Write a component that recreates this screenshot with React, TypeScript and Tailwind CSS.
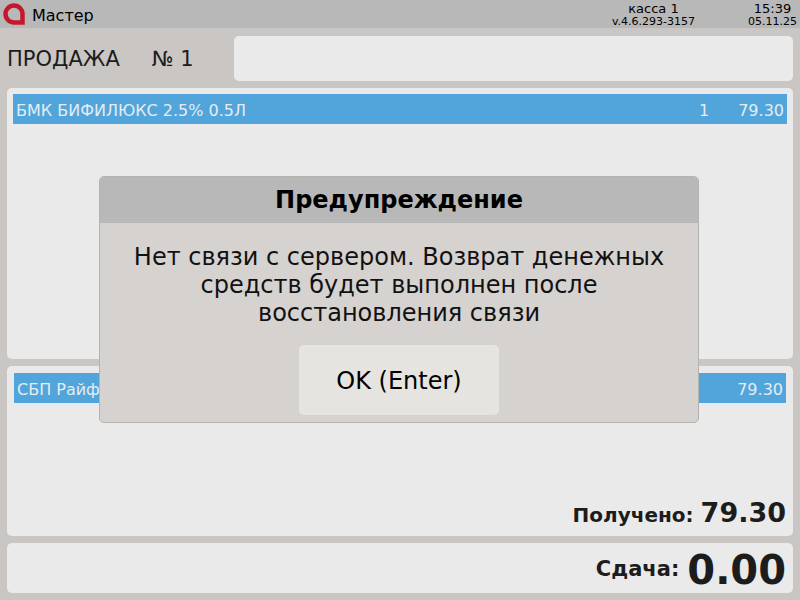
export default function App() {
  return (
    <div className="relative flex h-[600px] w-[800px] flex-col overflow-hidden bg-[#cac6c3] text-[#1c1c1c]" style={{ fontFamily: '"DejaVu Sans", sans-serif' }}>
      <header className="flex h-[28px] shrink-0 items-center bg-[#b8b8b8]">
        <svg className="ml-[3px] h-[22px] w-[22px]" viewBox="0 0 22 22">
          <path d="M19.5 19.5H11A8.5 8.5 0 1 1 19.5 11Z" fill="none" stroke="#c4182c" strokeWidth="4.5" strokeLinejoin="miter" />
        </svg>
        <span className="ml-[7px] pt-[3px] text-[16px] leading-none text-black">Мастер</span>
        <div className="ml-auto flex h-full flex-col items-center pt-[2px] text-black">
          <span className="text-[13px] leading-[14px]">касса 1</span>
          <span className="text-[11px] leading-[12px]">v.4.6.293-3157</span>
        </div>
        <div className="ml-[53px] mr-[3px] flex h-full flex-col items-center pt-[2px] text-black">
          <span className="text-[13px] leading-[14px]">15:39</span>
          <span className="text-[11px] leading-[12px]">05.11.25</span>
        </div>
      </header>
      <div className="flex h-[60px] shrink-0 items-center pl-[7px] pr-[7px]">
        <span className="pt-[4px] text-[21px]">ПРОДАЖА</span>
        <span className="ml-[32px] pt-[4px] text-[21px]">№ 1</span>
        <div className="ml-auto mt-[1px] h-[45px] w-[559px] rounded-[5px] bg-[#eaeaea]" />
      </div>
      <section className="mx-[7px] h-[271px] shrink-0 rounded-[5px] bg-[#eaeaea] p-[6px]">
        <div className="flex h-[30px] items-center bg-[#52a5da] pl-[3px] pr-[3px] pt-[3px] text-[16px] text-[#e4ecf2]">
          <span>БМК БИФИЛЮКС 2.5% 0.5Л</span>
          <span className="ml-auto">1</span>
          <span className="ml-[29px]">79.30</span>
        </div>
      </section>
      <section className="mx-[7px] mt-[7px] flex h-[170px] shrink-0 flex-col rounded-[5px] bg-[#eaeaea] px-[7px] pt-[7px]">
        <div className="flex h-[30px] items-center justify-between bg-[#52a5da] pl-[3px] pr-[3px] pt-[3px] text-[16px] text-[#e4ecf2]">
          <span>СБП Райффайзен</span>
          <span>79.30</span>
        </div>
        <div className="mt-auto mb-[3px] flex items-baseline justify-end">
          <span className="text-[20px] font-bold">Получено:</span>
          <span className="ml-[7px] text-[27px] font-bold">79.30</span>
        </div>
      </section>
      <section className="mx-[7px] mt-[7px] flex h-[50px] shrink-0 items-center justify-end rounded-[5px] bg-[#eaeaea] px-[7px]">
        <span className="pt-[3px] text-[21px] font-bold">Сдача:</span>
        <span className="ml-[8px] pt-[3px] text-[40px] font-bold leading-none">0.00</span>
      </section>
      <div className="absolute left-[99px] top-[176px] flex h-[247px] w-[600px] flex-col overflow-hidden rounded-[5px] border border-[#b5b3b0] bg-[#d6d2cf] text-black">
        <div className="flex h-[46px] shrink-0 items-center justify-center bg-[#b8b8b8] text-[24px] font-bold">Предупреждение</div>
        <p className="mt-[20px] text-center text-[24px] leading-[28px] text-[#111]">
          Нет связи с сервером. Возврат денежных<br />средств будет выполнен после<br />восстановления связи
        </p>
        <button className="mx-auto mt-[18px] h-[70px] w-[200px] rounded-[5px] bg-[#e6e4e1] pt-[2px] text-[24px]">OK (Enter)</button>
      </div>
    </div>
  );
}
